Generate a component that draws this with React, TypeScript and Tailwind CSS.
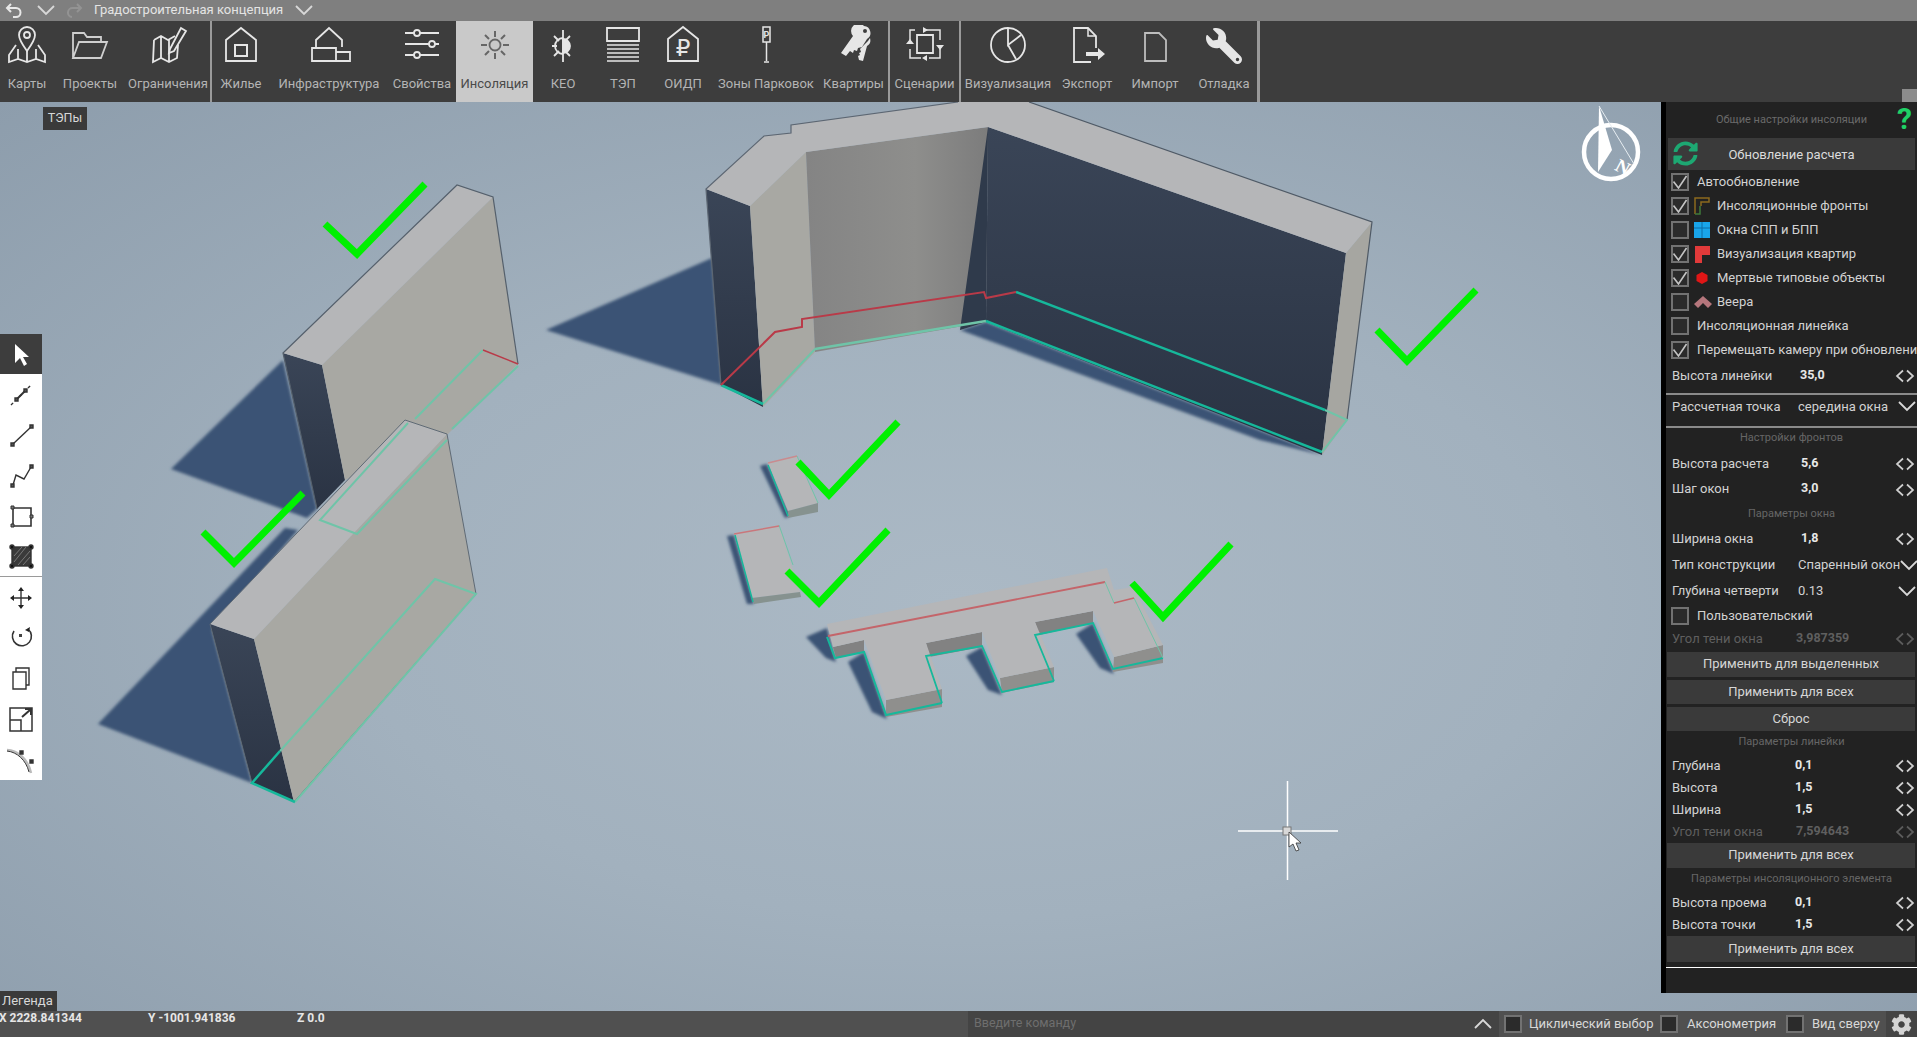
import type { ReactNode } from 'react'
import { FaCog, FaSyncAlt, FaWrench } from 'react-icons/fa'

const Arrows = ({ dim }: { dim?: boolean }) => (
  <svg width="20" height="14" viewBox="0 0 20 14" fill="none" stroke={dim ? '#5c5c5c' : '#d0d0d0'} strokeWidth="1.7" className="ml-auto mr-[1px] shrink-0">
    <path d="M8 1.5 2 7l6 5.5M12 1.5 18 7l-6 5.5" />
  </svg>
)

const Chevron = ({ up, className, w = 18 }: { up?: boolean; className?: string; w?: number }) => (
  <svg width={w} height="11" viewBox="0 0 18 11" fill="none" stroke="#d8d8d8" strokeWidth="1.8" className={className}>
    <path d={up ? 'M1 10 9 2l8 8' : 'M1 1l8 8 8-8'} />
  </svg>
)

const Box = ({ checked }: { checked?: boolean }) => (
  <span className="w-[18px] h-[18px] shrink-0 border-2 border-[#727272] bg-[#2b2b2b] flex items-center justify-center">
    {checked && (
      <svg width="14" height="14" viewBox="0 0 14 14" fill="none" stroke="#c4c4c4" strokeWidth="1.6">
        <path d="M0.5 6.5 5.5 13 13.5 1" />
      </svg>
    )}
  </span>
)

const checks: { label: string; on: boolean; icon?: ReactNode }[] = [
  { label: 'Автообновление', on: true },
  {
    label: 'Инсоляционные фронты',
    on: true,
    icon: (
      <svg width="16" height="18" viewBox="0 0 16 18" fill="none" strokeWidth="1.5">
        <path d="M1 17V1h14v4H7v4" stroke="#8c6a1e" />
        <path d="M1 17h5V9" stroke="#3f7a3a" />
      </svg>
    ),
  },
  {
    label: 'Окна СПП и БПП',
    on: false,
    icon: (
      <svg width="16" height="16" viewBox="0 0 16 16">
        <rect width="16" height="16" fill="#19a5ea" />
        <path d="M8 0v16M0 6h16" stroke="#0d6da6" strokeWidth="1" />
      </svg>
    ),
  },
  {
    label: 'Визуализация квартир',
    on: true,
    icon: (
      <svg width="16" height="17" viewBox="0 0 16 17">
        <path d="M1 0h15v9H8v8H1z" fill="#e23a3a" />
      </svg>
    ),
  },
  {
    label: 'Мертвые типовые объекты',
    on: true,
    icon: (
      <svg width="16" height="16" viewBox="0 0 16 16">
        <path d="M8 2l5.500 3v6L8 14l-5.500-3V5z" fill="#e01616" />
      </svg>
    ),
  },
  {
    label: 'Веера',
    on: false,
    icon: (
      <svg width="18" height="12" viewBox="0 0 18 12">
        <path d="M9 0l9 8-4 4-5-5-5 5-4-4z" fill="#b5767c" />
      </svg>
    ),
  },
  { label: 'Инсоляционная линейка', on: false },
  { label: 'Перемещать камеру при обновлении', on: true },
]

const Label = ({ text, className }: { text: string; className: string }) => (
  <div className={`text-center text-[11px] text-[#666] flex items-center justify-center pb-[2px] ${className}`}>{text}</div>
)

const Apply = ({ text, className }: { text: string; className: string }) => (
  <div className={`ml-[1px] mr-[2px] bg-[#3a3a3a] text-[#d6d6d6] flex items-center justify-center pb-[2px] ${className}`}>{text}</div>
)

function Row({ label, value, h, lw, dim, bold = true, select }: { label: string; value: string; h: string; lw: string; dim?: boolean; bold?: boolean; select?: boolean }) {
  return (
    <div className={`flex items-center pl-[6px] pr-[1px] shrink-0 ${h} ${dim ? 'text-[#5f5f5f]' : 'text-[#d2d2d2]'}`}>
      <span className={`shrink-0 pb-[2px] ${lw}`}>{label}</span>
      <span className={`pb-[2px] whitespace-nowrap ${bold ? 'font-bold text-[12.5px]' : ''} ${dim ? '' : bold ? 'text-[#e8e8e8]' : ''}`}>{value}</span>
      {select ? <Chevron className="ml-auto shrink-0" /> : <Arrows dim={dim} />}
    </div>
  )
}

function SettingsPanel() {
  return (
    <aside className="absolute right-0 top-0 w-[256px] h-[891px] bg-[#222222] border-l-[5px] border-black flex flex-col text-[13px] leading-none overflow-hidden">
      <div className="h-[34px] relative flex items-center justify-center text-[11px] text-[#6a6a6a] shrink-0">
        Общие настройки инсоляции
        <span className="absolute right-[5px] top-0 h-[34px] text-[#1fd166] text-[30px] font-bold leading-[34px]">?</span>
      </div>
      <div className="mt-[2px] ml-[2px] mr-[2px] h-[32px] bg-[#3a3a3a] relative flex items-center justify-center text-[#dcdcdc] shrink-0">
        <FaSyncAlt className="absolute left-[5px] top-[3px] text-[#1da872]" size={25} />
        Обновление расчета
      </div>
      {checks.map((c) => (
        <div key={c.label} className="h-[24px] flex items-center pl-[5px] whitespace-nowrap text-[#d2d2d2] shrink-0">
          <Box checked={c.on} />
          {c.icon ? <span className="w-[28px] pl-[5px] flex items-center shrink-0">{c.icon}</span> : <span className="w-[8px] shrink-0" />}
          <span className="pb-[2px]">{c.label}</span>
        </div>
      ))}
      <Row label="Высота линейки" value="35,0" h="h-[28px]" lw="w-[128px]" />
      <div className="mt-[3px] h-[2px] bg-[#8a8a8a] shrink-0" />
      <div className="h-[23px] flex items-center pl-[6px] pr-[1px] text-[#d2d2d2] shrink-0">
        <span className="w-[126px]">Рассчетная точка</span>
        <span>середина окна</span>
        <Chevron className="ml-auto" />
      </div>
      <div className="mt-[8px] h-[2px] bg-[#8a8a8a] shrink-0" />
      <Label text="Настройки фронтов" className="h-[20px] shrink-0" />
      <div className="h-[3px] shrink-0" />
      <Row label="Высота расчета" value="5,6" h="h-[26px]" lw="w-[129px]" />
      <Row label="Шаг окон" value="3,0" h="h-[25px]" lw="w-[129px]" />
      <Label text="Параметры окна" className="h-[24px] shrink-0" />
      <Row label="Ширина окна" value="1,8" h="h-[26px]" lw="w-[129px]" />
      <Row label="Тип конструкции" value="Спаренный окон" h="h-[26px]" lw="w-[126px]" bold={false} select />
      <Row label="Глубина четверти" value="0.13" h="h-[26px]" lw="w-[126px]" bold={false} select />
      <div className="h-[24px] flex items-center pl-[5px] text-[#d2d2d2] shrink-0">
        <Box />
        <span className="ml-[8px] pb-[2px]">Пользовательский</span>
      </div>
      <Row label="Угол тени окна" value="3,987359" h="h-[22px]" lw="w-[124px]" dim />
      <Apply text="Применить для выделенных" className="mt-[2px] h-[25px] shrink-0" />
      <Apply text="Применить для всех" className="mt-[3px] h-[24px] shrink-0" />
      <Apply text="Сброс" className="mt-[3px] h-[24px] shrink-0" />
      <Label text="Параметры линейки" className="h-[22px] shrink-0" />
      <div className="h-[2px] shrink-0" />
      <Row label="Глубина" value="0,1" h="h-[22px]" lw="w-[123px]" />
      <Row label="Высота" value="1,5" h="h-[22px]" lw="w-[123px]" />
      <Row label="Ширина" value="1,5" h="h-[22px]" lw="w-[123px]" />
      <Row label="Угол тени окна" value="7,594643" h="h-[22px]" lw="w-[124px]" dim />
      <Apply text="Применить для всех" className="h-[25px] shrink-0" />
      <Label text="Параметры инсоляционного элемента" className="h-[22px] shrink-0" />
      <div className="h-[2px] shrink-0" />
      <Row label="Высота проема" value="0,1" h="h-[22px]" lw="w-[123px]" />
      <Row label="Высота точки" value="1,5" h="h-[22px]" lw="w-[123px]" />
      <Apply text="Применить для всех" className="h-[26px] shrink-0" />
      <div className="mt-[5px] h-[1px] bg-white shrink-0" />
    </aside>
  )
}

// toolbar icons are drawn on a 44x40 box
const I = ({ children, dark }: { children: ReactNode; dark?: boolean }) => (
  <svg width="44" height="40" viewBox="0 0 44 40" fill="none" stroke={dark ? '#666' : '#e6e6e6'} strokeWidth="1.8">
    {children}
  </svg>
)

const toolbar: { label: string; w: string; icon: ReactNode; active?: boolean; sep?: string }[] = [
  {
    label: 'Карты',
    w: 'w-[54px]',
    icon: (
      <I>
        <path d="M11 20 4 30v7l9-3 9 3 9-3 9 3v-7l-7-10M13 24v10M31 24v10M22 26v11" />
        <path d="M22 2a8 8 0 0 1 8 8c0 5-8 16-8 16s-8-11-8-16a8 8 0 0 1 8-8z" />
        <circle cx="22" cy="10" r="3" />
      </I>
    ),
  },
  {
    label: 'Проекты',
    w: 'w-[72px]',
    icon: (
      <I>
        <path d="M5 33V8h11l3 4h14v5M5 33l6-16h28l-6 16z" stroke="#cfcfcf" />
      </I>
    ),
  },
  {
    label: 'Ограничения',
    w: 'w-[84px]',
    sep: 'w-[2px]',
    icon: (
      <I>
        <path d="M8 15 15 11l7 4 7-4M8 15l-1 22 8-4 8 4 8-4 1-13M15 11v22M23 15v22" />
        <path d="M24 24 35 3l5 3-12 20-5 2z" />
      </I>
    ),
  },
  {
    label: 'Жилье',
    w: 'w-[58px]',
    icon: (
      <I>
        <path d="M7 36V15L22 3l15 12v21z" />
        <path d="M16 20h12v11H16z" strokeWidth="2" />
      </I>
    ),
  },
  {
    label: 'Инфраструктура',
    w: 'w-[118px]',
    icon: (
      <I>
        <path d="M9 22V15L22 3l13 12v7" />
        <path d="M5 23h24v13H5zM29 27h14v9H29z" />
      </I>
    ),
  },
  {
    label: 'Свойства',
    w: 'w-[68px]',
    icon: (
      <I>
        <path d="M5 8h9M20 8h19M5 19h24M35 19h4M5 30h9M20 30h19" />
        <circle cx="17" cy="8" r="3" />
        <circle cx="32" cy="19" r="3" />
        <circle cx="17" cy="30" r="3" />
      </I>
    ),
  },
  {
    label: 'Инсоляция',
    w: 'w-[77px]',
    active: true,
    icon: (
      <I dark>
        <circle cx="22" cy="20" r="5.5" />
        <path d="M22 6v6M22 28v6M8 20h6M30 20h6M12 10l4 4M28 26l4 4M12 30l4-4M28 14l4-4" strokeWidth="2" />
      </I>
    ),
  },
  {
    label: 'КЕО',
    w: 'w-[60px]',
    icon: (
      <I>
        <path d="M22 14a7 7 0 0 1 0 14z" fill="#e6e6e6" />
        <path d="M22 5v32M16 21h-5M13 11l5 5M13 31l5-5M29 11l-4 4M29 31l-4-4" />
        <path d="M22 13a8 8 0 0 0 0 16" />
      </I>
    ),
  },
  {
    label: 'ТЭП',
    w: 'w-[60px]',
    icon: (
      <I>
        <path d="M6 3h32v13H6z" />
        <path d="M6 20h32M6 24h32M6 28h32M6 32h32M6 36h32" strokeWidth="1.5" />
      </I>
    ),
  },
  {
    label: 'ОИДП',
    w: 'w-[60px]',
    icon: (
      <I>
        <path d="M7 36V14L22 2l15 12v22z" />
        <text x="22" y="31" textAnchor="middle" fontSize="23" fontFamily="DejaVu Sans" fill="#e6e6e6" stroke="none">₽</text>
      </I>
    ),
  },
  {
    label: 'Зоны Парковок',
    w: 'w-[106px]',
    icon: (
      <I>
        <path d="M19 2h7v15h-7z" strokeWidth="1.5" />
        <text x="22.500" y="13" textAnchor="middle" fontSize="9" fontWeight="700" fontFamily="Roboto" fill="#e6e6e6" stroke="none">P</text>
        <path d="M22.500 17v19M20 37h5" strokeWidth="1.500" />
      </I>
    ),
  },
  {
    label: 'Квартиры',
    w: 'w-[69px]',
    sep: 'w-[2px]',
    icon: (
      <I>
        <g fill="#e6e6e6" stroke="none">
          <path d="M32 1a7 7 0 0 1 3 13l-5 8-4 1-1 3-3-1-1 3-3-2-4 5-5-3 12-17a7 7 0 0 1 11-10zm1 3a2 2 0 1 0 0 4 2 2 0 0 0 0-4z" />
          <path d="M36 16l2-3c1 4 0 6-3 8l-4 15-4-1-1-4 2-1-1-2 2-1-1-3z" />
        </g>
      </I>
    ),
  },
  {
    label: 'Сценарии',
    w: 'w-[69px]',
    sep: 'w-[2px]',
    icon: (
      <I>
        <path d="M14 10h16v18H14z" />
        <path d="M12 5H7v10M7 24v9h11M26 33h11V24M37 15V5H20" strokeWidth="1.500" />
        <path d="M20 2l5 3-5 3zM24 36l-5-3 5-3zM3 19l4-5 4 5zM41 20l-4 5-4-5z" fill="#e6e6e6" stroke="none" />
      </I>
    ),
  },
  {
    label: 'Визуализация',
    w: 'w-[94px]',
    icon: (
      <I>
        <circle cx="22" cy="20" r="17" />
        <path d="M22 3v17l13-10M22 20l8 14" />
      </I>
    ),
  },
  {
    label: 'Экспорт',
    w: 'w-[64px]',
    icon: (
      <I>
        <path d="M31 23V11l-8-8H9v34h17" />
        <path d="M23 3v8h8" strokeWidth="1.500" />
        <path d="M21 27h12v-4l7 6-7 6v-4H21z" fill="#e6e6e6" stroke="none" />
      </I>
    ),
  },
  {
    label: 'Импорт',
    w: 'w-[72px]',
    icon: (
      <I>
        <path d="M12 8h14l7 7v21H12z" stroke="#bdbdbd" />
      </I>
    ),
  },
  {
    label: 'Отладка',
    w: 'w-[66px]',
    sep: 'w-[3px]',
    icon: <FaWrench size={36} className="text-[#e6e6e6] mt-[2px] -scale-x-100" />,
  },
]

function Toolbar() {
  return (
    <div className="h-[81px] shrink-0 bg-[#3d3d3d] flex relative">
      {toolbar.map((t) => (
        <div key={t.label} className="contents">
          <div className={`${t.w} h-full flex flex-col items-center ${t.active ? 'bg-[#c9c9c9] text-[#4a4a4a]' : 'text-[#b4b4b4]'}`}>
            <div className="mt-[4px] h-[40px] flex items-center justify-center">{t.icon}</div>
            <span className="mt-[11px] text-[13px] leading-[16px] whitespace-nowrap">{t.label}</span>
          </div>
          {t.sep && <div className={`${t.sep} h-full bg-[#9a9a9a] shrink-0`} />}
        </div>
      ))}
      <div className="absolute right-0 bottom-0 w-[15px] h-[13px] bg-[#8c8c8c]" />
    </div>
  )
}

function TopBar() {
  return (
    <div className="h-[21px] shrink-0 bg-[#7f7f7f] flex items-center text-[13px] text-[#e4e4e4]">
      <svg width="20" height="16" viewBox="0 0 20 16" fill="none" stroke="#e8e8e8" strokeWidth="2" className="ml-[5px]">
        <path d="M3 5h8a4.500 4.500 0 0 1 0 9H8M6 1 2 5l4 4" />
      </svg>
      <Chevron className="ml-[12px]" />
      <svg width="16" height="16" viewBox="0 0 16 16" fill="none" stroke="#939393" strokeWidth="2" className="ml-[12px]">
        <path d="M13 5H6a4 4 0 0 0-1 9M10 1l4 4-4 4" />
      </svg>
      <span className="ml-[11px] pb-[2px]">Градостроительная концепция</span>
      <Chevron className="ml-[12px]" />
    </div>
  )
}

const T = ({ children, active, sep, h = 'h-[40px]' }: { children: ReactNode; active?: boolean; sep?: boolean; h?: string }) => (
  <div className={`w-[42px] flex items-center justify-center shrink-0 ${h} ${active ? 'bg-[#3d3d3d]' : ''} ${sep ? 'border-b border-[#9a9a9a]' : ''}`}>
    <svg width="30" height="30" viewBox="0 0 30 30" fill="none" stroke="#333" strokeWidth="1.4">
      {children}
    </svg>
  </div>
)

function ToolStrip() {
  return (
    <div className="absolute left-0 top-[232px] w-[42px] h-[446px] bg-white flex flex-col">
      <T active>
        <path d="M9 5v19l5-5 4 8 3-2-4-7h6z" fill="#fff" stroke="none" />
      </T>
      <T h="h-[41px]">
        <path d="M5 25 25 5" strokeDasharray="3 3" />
        <path d="M11 19 19 11" strokeWidth="2" />
        <path d="M9 18h3v3H9zM18 9h3v3h-3z" fill="#555" />
      </T>
      <T h="h-[41px]">
        <path d="M7 23 25 6" />
        <path d="M5 22h3v3H5zM24 4h3v3h-3z" fill="#555" />
      </T>
      <T h="h-[41px]">
        <path d="M7 23 10 13l8 4 7-12" />
        <path d="M5 22h3v3H5zM24 3h3v3h-3z" fill="#555" />
      </T>
      <T>
        <path d="M7 6h18v18H7z" strokeWidth="1.600" />
        <path d="M5 4h3v3H5zM5 22h3v3H5zM24 13h3v3h-3z" fill="#777" strokeWidth="1" />
      </T>
      <T sep>
        <rect x="6" y="5" width="19" height="19" fill="#3a3a3a" />
        <path d="M8 14l8-9M8 20l12-15M12 23 24 9M17 23l7-8" stroke="#888" strokeWidth="0.8" />
        <circle cx="6" cy="5" r="2" fill="#111" />
        <circle cx="25" cy="5" r="2" fill="#111" />
        <circle cx="6" cy="24" r="2" fill="#111" />
        <circle cx="25" cy="24" r="2" fill="#111" />
      </T>
      <T h="h-[42px]">
        <path d="M15 6v18M6 15h18" />
        <path d="M15 4l-3 4h6zM15 26l-3-4h6zM4 15l4-3v6zM26 15l-4-3v6z" fill="#222" stroke="none" />
      </T>
      <T>
        <g transform="translate(0 -3)">
          <path d="M22 8a9.500 9.500 0 1 1-14 2" strokeWidth="1.600" />
          <path d="M24 6l-1 5-4-2z" fill="#222" stroke="none" />
          <rect x="13" y="13" width="3" height="3" fill="#444" stroke="none" />
        </g>
      </T>
      <T>
        <g transform="translate(0 -2)">
          <path d="M7 10h13v17H7zM10 10V6h13v17h-3" />
        </g>
      </T>
      <T h="h-[41px]">
        <g transform="translate(0 -2)">
          <path d="M4 5h22v23H4zM4 17h11v11" strokeWidth="1.500" />
          <path d="M16 14 24 7M19 6h6v6" strokeWidth="2" />
        </g>
      </T>
      <T>
        <path d="M1 5c10 0 21 9 24 23" strokeWidth="2.500" stroke="#bbb" />
        <path d="M1 6c10 1 19 9 22 21" strokeWidth="1" />
        <path d="M14 6h3v3h-3zM24 15h3v3h-3z" fill="#333" />
      </T>
    </div>
  )
}

const pts = (p: number[][]) => p.map((q) => q.join(',')).join(' ')
const TEAL = '#16b89b'
const PALE = '#6fc4a8'
const RED = '#b93a48'
const TOP = '#b5b6b8'
const SIDE = '#a8a8a3'
const CHECK = '#00f000'

const checkmarks = [
  [[1377, 330], [1407, 361], [1476, 290]],
  [[325, 224], [357, 254], [425, 184]],
  [[203, 532], [234, 563], [303, 493]],
  [[798, 462], [829, 495], [898, 422]],
  [[787, 571], [819, 603], [888, 530]],
  [[1132, 583], [1163, 617], [1231, 544]],
]

function Scene() {
  return (
    <svg className="absolute inset-0 w-full h-full" viewBox="0 102 1917 909" fill="none">
      <defs>
        <linearGradient id="dark" x1="0" y1="0" x2="0" y2="1">
          <stop offset="0" stopColor="#3a4557" />
          <stop offset="1" stopColor="#2a3343" />
        </linearGradient>
        <linearGradient id="wall" x1="0" y1="0" x2="1" y2="0">
          <stop offset="0" stopColor="#848484" />
          <stop offset="0.6" stopColor="#8e8e8c" />
          <stop offset="1" stopColor="#7c7c7c" />
        </linearGradient>
        <filter id="soft">
          <feGaussianBlur stdDeviation="1.5" />
        </filter>
      </defs>

      <g fill="#3b5274" filter="url(#soft)">
        <polygon points={pts([[712, 258], [546, 330], [722, 385]])} />
        <polygon points={pts([[960, 330], [986, 322], [1322, 455], [1260, 440]])} />
        <polygon points={pts([[283, 360], [171, 469], [307, 518], [317, 509]])} />
        <polygon points={pts([[285, 528], [298, 530], [212, 630], [252, 783], [98, 724]])} />
        <polygon points={pts([[767, 464], [760, 466], [785, 518], [790, 516]])} />
        <polygon points={pts([[734, 535], [727, 536], [747, 604], [754, 604]])} />
        <polygon points={pts([[827, 628], [806, 637], [826, 658], [836, 662]])} />
        <polygon points={pts([[864, 652], [848, 662], [872, 712], [887, 719]])} />
        <polygon points={pts([[982, 647], [966, 656], [988, 690], [1002, 695]])} />
        <polygon points={pts([[1093, 623], [1076, 634], [1100, 668], [1114, 674]])} />
      </g>

      {/* big L shaped block */}
      <polygon points={pts([[706, 189], [750, 206], [763, 407], [721, 385]])} fill="url(#dark)" />
      <polygon points={pts([[750, 206], [806, 152], [815, 352], [763, 407]])} fill={SIDE} />
      <polygon points={pts([[806, 152], [988, 127], [986, 322], [815, 352]])} fill="url(#wall)" />
      <polygon points={pts([[988, 127], [986, 322], [960, 330], [974, 230]])} fill="#2f3a4b" />
      <polygon points={pts([[988, 127], [1346, 253], [1322, 455], [986, 322]])} fill="url(#dark)" />
      <polygon points={pts([[1346, 253], [1372, 222], [1347, 420], [1322, 455]])} fill="#a6a6a1" />
      <polygon points={pts([[706, 189], [764, 136], [791, 133], [791, 125], [958, 102], [1029, 102], [1372, 222], [1346, 253], [988, 127], [806, 152], [750, 206]])} fill={TOP} />
      <polyline points={pts([[721, 385], [706, 189], [764, 136], [791, 133], [791, 125], [958, 102]])} stroke="#5c6672" strokeWidth="1.2" />
      <polyline points={pts([[1029, 102], [1372, 222], [1347, 420]])} stroke="#4f5a66" strokeWidth="1.2" />
      <polyline points={pts([[763, 404], [815, 349]])} stroke={PALE} strokeWidth="2" />
      <polyline points={pts([[815, 349], [986, 321]])} stroke={PALE} strokeWidth="2.5" />
      <polyline points={pts([[721, 385], [763, 404]])} stroke={TEAL} strokeWidth="2.500" />
      <polyline points={pts([[986, 321], [1322, 452]])} stroke={TEAL} strokeWidth="2.500" />
      <polyline points={pts([[1322, 452], [1347, 420], [1325, 410]])} stroke={PALE} strokeWidth="2" />
      <polyline points={pts([[1325, 410], [1016, 292]])} stroke={TEAL} strokeWidth="2.500" />
      <polyline points={pts([[1016, 292], [986, 298], [984, 292], [802, 319], [802, 327], [775, 332], [721, 385]])} stroke={RED} strokeWidth="2" />

      {/* back slab */}
      <polygon points={pts([[283, 353], [322, 365], [345, 480], [317, 509]])} fill="url(#dark)" />
      <polygon points={pts([[322, 365], [493, 197], [518, 364], [448, 434], [345, 480]])} fill={SIDE} />
      <polygon points={pts([[283, 353], [457, 185], [493, 197], [322, 365]])} fill={TOP} />
      <polyline points={pts([[317, 509], [283, 353], [457, 185], [493, 197], [518, 364]])} stroke="#55606c" strokeWidth="1.2" />
      <polyline points={pts([[415, 419], [483, 350]])} stroke={PALE} strokeWidth="2" />
      <polyline points={pts([[452, 429], [518, 366]])} stroke={PALE} strokeWidth="2" />
      <polyline points={pts([[483, 350], [518, 364]])} stroke={RED} strokeWidth="1.5" />

      {/* front slab */}
      <polygon points={pts([[210, 624], [254, 639], [294, 802], [252, 783]])} fill="url(#dark)" />
      <polygon points={pts([[254, 639], [447, 434], [476, 594], [294, 802]])} fill={SIDE} />
      <polygon points={pts([[210, 624], [405, 420], [447, 434], [254, 639]])} fill={TOP} />
      <polyline points={pts([[252, 783], [210, 624], [405, 420], [447, 434], [476, 594], [294, 802]])} stroke="#5f6a75" strokeWidth="1" />
      <polyline points={pts([[408, 423], [320, 520], [357, 534], [447, 440]])} stroke={PALE} strokeWidth="2" />
      <polyline points={pts([[280, 751], [435, 579], [476, 594], [295, 802]])} stroke={PALE} strokeWidth="2" />
      <polyline points={pts([[280, 751], [252, 783], [295, 802]])} stroke={TEAL} strokeWidth="2.5" />

      {/* small blocks */}
      <polygon points={pts([[768, 463], [797, 456], [818, 503], [788, 511]])} fill={TOP} />
      <polygon points={pts([[788, 511], [818, 503], [818, 512], [788, 518]])} fill="#86928f" />
      <polyline points={pts([[768, 465], [788, 516]])} stroke={TEAL} strokeWidth="1.5" />
      <polyline points={pts([[797, 456], [818, 503]])} stroke={PALE} strokeWidth="1" />
      <polyline points={pts([[768, 463], [797, 456]])} stroke="#c98b8f" strokeWidth="1.5" />
      <polygon points={pts([[734, 533], [779, 525], [800, 592], [752, 598]])} fill={TOP} />
      <polygon points={pts([[752, 598], [800, 592], [801, 597], [754, 604]])} fill="#86928f" />
      <polyline points={pts([[735, 535], [753, 602]])} stroke={TEAL} strokeWidth="1.5" />
      <polyline points={pts([[779, 525], [793, 565]])} stroke={PALE} strokeWidth="1" />
      <polyline points={pts([[734, 534], [779, 526]])} stroke="#c9777c" strokeWidth="1.5" />

      {/* comb block */}
      <polygon points={pts([[833, 647], [864, 640], [864, 652], [836, 658]])} fill="#828282" />
      <polygon points={pts([[926, 643], [982, 632], [982, 647], [929, 657]])} fill="#828282" />
      <polygon points={pts([[1035, 622], [1093, 611], [1093, 623], [1039, 635]])} fill="#828282" />
      <polygon points={pts([[886, 700], [942, 689], [942, 707], [886, 717]])} fill="#8f8f8d" />
      <polygon points={pts([[1000, 678], [1054, 667], [1054, 682], [1002, 693]])} fill="#8f8f8d" />
      <polygon points={pts([[1114, 657], [1163, 645], [1163, 663], [1113, 672]])} fill="#8f8f8d" />
      <polygon points={pts([[827, 624], [1107, 568], [1114, 590], [1133, 587], [1163, 645], [1114, 657], [1093, 611], [1035, 622], [1054, 667], [1000, 678], [982, 632], [926, 643], [942, 689], [886, 700], [864, 640], [833, 647]])} fill={TOP} />
      <polyline points={pts([[827, 637], [835, 658], [864, 652], [886, 715], [942, 703]])} stroke={TEAL} strokeWidth="2" />
      <polyline points={pts([[942, 703], [926, 656], [982, 646], [1002, 692], [1054, 681]])} stroke={TEAL} strokeWidth="1.800" />
      <polyline points={pts([[1054, 681], [1035, 635], [1093, 623], [1113, 669], [1163, 658]])} stroke={TEAL} strokeWidth="1.800" />
      <polyline points={pts([[1163, 658], [1134, 598]])} stroke={PALE} strokeWidth="1" />
      <polyline points={pts([[828, 636], [1105, 582]])} stroke="#c4656a" strokeWidth="1.8" />
      <polyline points={pts([[1105, 582], [1114, 603]])} stroke={PALE} strokeWidth="1" />
      <polyline points={pts([[1114, 603], [1134, 598]])} stroke="#c4656a" strokeWidth="1.8" />

      {checkmarks.map((c, i) => (
        <polyline key={i} points={pts(c)} stroke={CHECK} strokeWidth="7" />
      ))}

      {/* compass */}
      <circle cx="1611" cy="152" r="27" stroke="#fff" strokeWidth="4.5" />
      <polygon points={pts([[1599, 106], [1598, 172], [1612, 150]])} fill="#fff" />
      <polyline points={pts([[1599, 106], [1634, 164]])} stroke="#e8eef2" strokeWidth="1" />
      <text x="1616" y="170" fontSize="19" fontWeight="700" fontFamily="Liberation Serif" fill="#fff" transform="rotate(28 1616 165)">N</text>

      {/* crosshair */}
      <path d="M1238 831h100M1287.500 781v99" stroke="#fff" strokeWidth="1.5" />
      <rect x="1283" y="827" width="8" height="8" fill="#d8d8d8" stroke="#777" />
      <path d="M1289 832v15l4-3 3 7 3-1-3-7h5z" fill="#fff" stroke="#333" strokeWidth="0.8" />
    </svg>
  )
}

function BottomBar() {
  return (
    <div className="h-[26px] shrink-0 bg-[#505050] flex text-[#dcdcdc] relative">
      <div className="w-[968px] h-full relative text-[12px] font-bold text-[#e6e6e6] leading-[14px]">
        <span className="absolute left-[-1px] top-0">X 2228.841344</span>
        <span className="absolute left-[148px] top-0">Y -1001.941836</span>
        <span className="absolute left-[297px] top-0">Z 0.0</span>
      </div>
      <div className="w-[531px] h-full bg-[#444444] flex items-center pl-[6px] pb-[1px] text-[12.5px] text-[#6e6e6e]">
        Введите команду
        <Chevron up className="ml-auto mr-[7px]" />
      </div>
      <div className="flex-1 flex items-center pl-[5px] text-[13px] text-[#d8d8d8]">
        <Box />
        <span className="ml-[7px] w-[131px] whitespace-nowrap">Циклический выбор</span>
        <Box />
        <span className="ml-[9px] w-[99px] whitespace-nowrap">Аксонометрия</span>
        <Box />
        <span className="ml-[8px] whitespace-nowrap">Вид сверху</span>
      </div>
      <div className="w-[31px] h-full bg-[#444444] flex items-center justify-center">
        <FaCog size={21} className="text-[#d4d4d4]" />
      </div>
    </div>
  )
}

export default function App() {
  return (
    <div className="w-[1917px] h-[1037px] overflow-hidden flex flex-col font-[family-name:Roboto,sans-serif]">
      <TopBar />
      <Toolbar />
      <main className="flex-1 relative bg-[radial-gradient(ellipse_at_50%_55%,#abb9c5_0%,#a2b1be_45%,#8d9dac_100%)]">
        <Scene />
        <div className="absolute left-[43px] top-[5px] h-[23px] w-[44px] bg-[#3a3a3a] text-[#d8d8d8] text-[12.5px] flex items-center justify-center">ТЭПы</div>
        <ToolStrip />
        <SettingsPanel />
        <div className="absolute left-0 bottom-0 h-[20px] w-[57px] bg-[#3a3a3a] text-[#d8d8d8] text-[13px] flex items-center pl-[2px]">Легенда</div>
      </main>
      <BottomBar />
    </div>
  )
}
